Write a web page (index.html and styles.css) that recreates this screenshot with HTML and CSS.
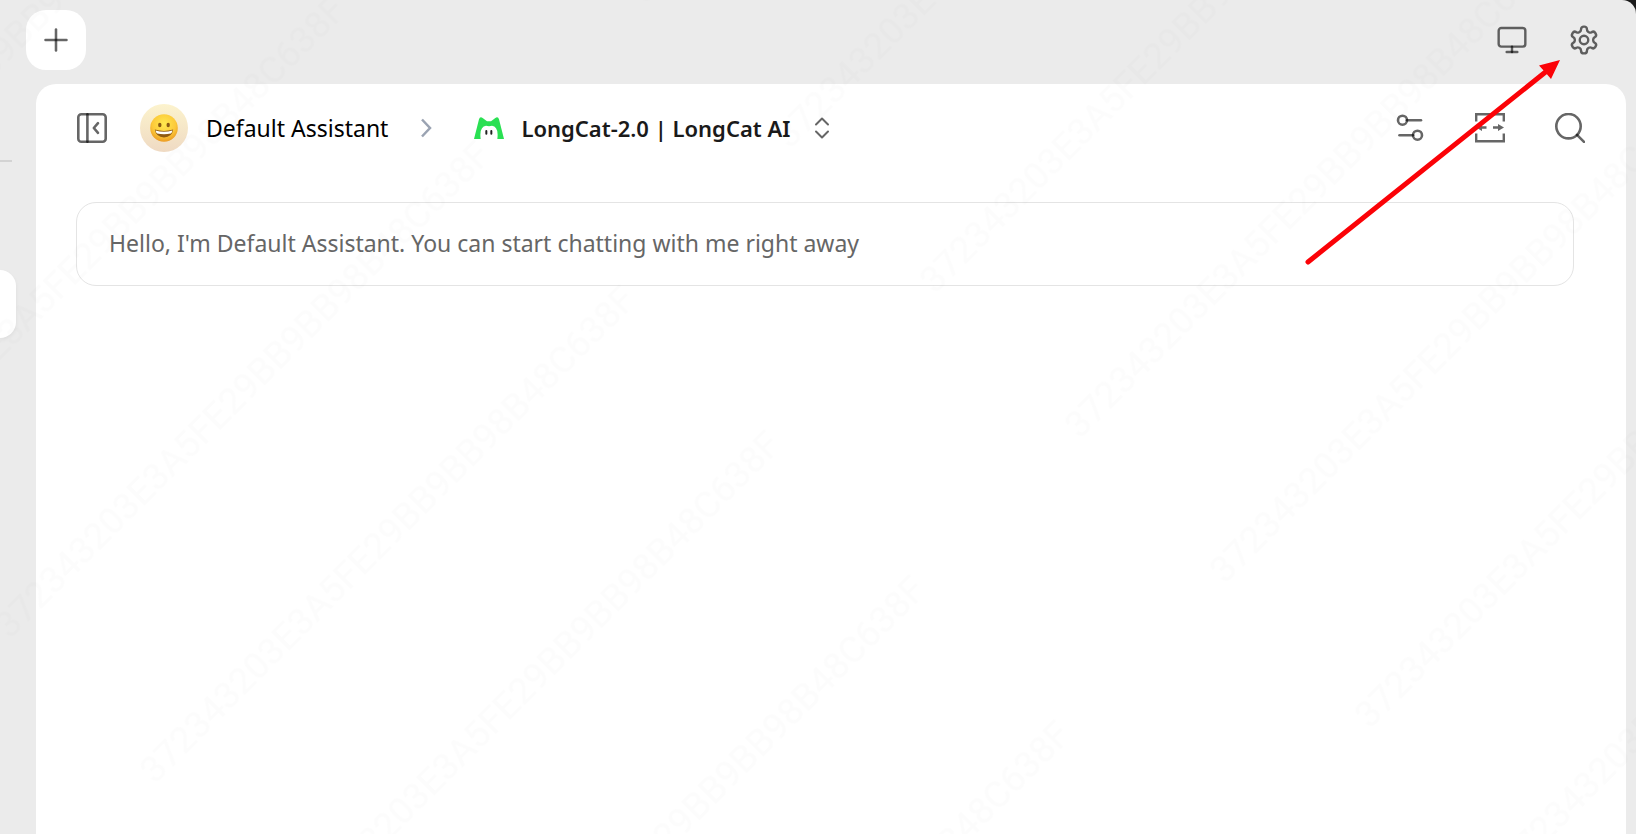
FILE: index.html
```
<!DOCTYPE html>
<html lang="en">

<head>
    <meta charset="UTF-8">
    <meta name="viewport" content="width=device-width, initial-scale=1.0">
    <title>Default Assistant</title>
    <link rel="stylesheet" href="styles.css">
</head>

<body>
<div class="window">
    <header class="tab-bar">
        <button type="button" class="new-tab" aria-label="New tab">
            <svg class="icon" width="36" height="36" viewBox="0 0 24 24" stroke-width="1.7">
                <path d="M5 12h14"/>
                <path d="M12 5v14"/>
            </svg>
        </button>
        <div class="tab-actions">
            <button type="button" class="icon-button" aria-label="Theme">
                <svg class="icon" width="32" height="32" viewBox="0 0 24 24" stroke-width="1.8">
                    <rect x="2" y="3" width="20" height="14" rx="2"/>
                    <path d="M8 21h8"/>
                    <path d="M12 17v4"/>
                </svg>
            </button>
            <button type="button" class="icon-button" aria-label="Settings">
                <svg class="icon" width="32" height="32" viewBox="0 0 24 24" stroke-width="1.8">
                    <path d="M12.22 2h-.44a2 2 0 0 0-2 2v.18a2 2 0 0 1-1 1.73l-.43.25a2 2 0 0 1-2 0l-.15-.08a2 2 0 0 0-2.73.73l-.22.38a2 2 0 0 0 .73 2.73l.15.1a2 2 0 0 1 1 1.72v.51a2 2 0 0 1-1 1.74l-.15.09a2 2 0 0 0-.73 2.73l.22.38a2 2 0 0 0 2.73.73l.15-.08a2 2 0 0 1 2 0l.43.25a2 2 0 0 1 1 1.73V20a2 2 0 0 0 2 2h.44a2 2 0 0 0 2-2v-.18a2 2 0 0 1 1-1.73l.43-.25a2 2 0 0 1 2 0l.15.08a2 2 0 0 0 2.73-.73l.22-.39a2 2 0 0 0-.73-2.73l-.15-.08a2 2 0 0 1-1-1.74v-.5a2 2 0 0 1 1-1.74l.15-.09a2 2 0 0 0 .73-2.73l-.22-.38a2 2 0 0 0-2.73-.73l-.15.08a2 2 0 0 1-2 0l-.43-.25a2 2 0 0 1-1-1.73V4a2 2 0 0 0-2-2z"/>
                    <circle cx="12" cy="12" r="3.2"/>
                </svg>
            </button>
        </div>
    </header>

    <div class="workspace">
        <aside class="sidebar">
            <div class="sidebar-divider"></div>
            <div class="sidebar-item"></div>
        </aside>

        <main class="chat">
            <nav class="chat-header">
                <button type="button" class="icon-button" aria-label="Hide sidebar">
                    <svg class="icon" width="30" height="30" viewBox="0 0 30 30" stroke-width="2.6">
                        <rect x="1.3" y="1.3" width="27.4" height="27.4" rx="3"/>
                        <path d="M10.4 1.3v27.4"/>
                        <path d="M21 10.2 16.8 15l4.2 4.8"/>
                    </svg>
                </button>
                <button type="button" class="assistant">
                    <span class="avatar">
                        <svg width="28" height="28" viewBox="0 0 28 28">
                            <defs>
                                <radialGradient id="face" cx="50%" cy="35%" r="65%">
                                    <stop offset="0" stop-color="#ffe94f"/>
                                    <stop offset="0.65" stop-color="#fcc93a"/>
                                    <stop offset="1" stop-color="#ec9b22"/>
                                </radialGradient>
                            </defs>
                            <circle cx="14" cy="14" r="13.8" fill="url(#face)"/>
                            <ellipse cx="9.8" cy="11" rx="1.7" ry="2.2" fill="#8a5a14"/>
                            <ellipse cx="18.2" cy="11" rx="1.7" ry="2.2" fill="#8a5a14"/>
                            <path d="M4.8 15.6Q14 18.4 23.2 15.6 22 23.4 14 23.4T4.8 15.6Z" fill="#8f5a12"/>
                            <path d="M5.6 16.4Q14 19 22.4 16.4 22 18.8 20.8 19.6 14 21 7.2 19.6 6 18.8 5.6 16.4Z" fill="#fff"/>
                        </svg>
                    </span>
                    <span>Default Assistant</span>
                </button>
                <svg class="separator" width="12" height="20" viewBox="0 0 12 20">
                    <path d="M2 1.5 10 10l-8 8.5"/>
                </svg>
                <button type="button" class="model">
                    <svg width="30" height="22" viewBox="0 0 90 66">
                        <path fill="#2ae053" d="M0 66 15 7Q18-3 27 4L39 13H51L63 4Q72-3 75 7L90 66H70Q73 43 66 34 62 26 54 26 50 26 45 28 40 26 36 26 28 26 24 34 17 43 20 66Z"/>
                        <rect x="34" y="39" width="6" height="14" rx="3" fill="#222"/>
                        <rect x="49" y="39" width="6" height="14" rx="3" fill="#222"/>
                    </svg>
                    <span class="model-name">LongCat-2.0 | LongCat AI</span>
                    <svg class="icon" width="16" height="22" viewBox="0 0 16 22" stroke-width="2">
                        <path d="M2 7.5l6-6 6 6"/>
                        <path d="M2 14.5l6 6 6-6"/>
                    </svg>
                </button>
                <div class="chat-actions">
                    <button type="button" class="icon-button" aria-label="Assistant settings">
                        <svg class="icon" width="30" height="30" viewBox="0 0 30 30" stroke-width="2.6">
                            <circle cx="7.5" cy="7.2" r="4.5"/>
                            <path d="M12 7.2h14"/>
                            <circle cx="22.5" cy="22.2" r="4.5"/>
                            <path d="M4.5 22.2H18"/>
                        </svg>
                    </button>
                    <button type="button" class="icon-button" aria-label="Wide mode">
                        <svg class="icon icon-square" width="30" height="30" viewBox="0 0 30 30" stroke-width="2.4">
                            <path d="M1.2 8.5V1.2H28.8V8.5M1.2 20.5V28.2H28.8V20.5"/>
                            <path d="M11.5 14.5H7M18 14.5h5"/>
                            <path class="solid" d="M1 14.5 7 11v7ZM29 14.5 23 11v7Z"/>
                        </svg>
                    </button>
                    <button type="button" class="icon-button" aria-label="Search">
                        <svg class="icon" width="30" height="30" viewBox="0 0 30 30" stroke-width="2.6">
                            <circle cx="13.5" cy="13.2" r="12.2"/>
                            <path d="M22 21.8l7 7"/>
                        </svg>
                    </button>
                </div>
            </nav>

            <p class="greeting">Hello, I'm Default Assistant. You can start chatting with me right away</p>
        </main>
    </div>

    <!-- watermark over the whole window -->
    <svg class="watermark" aria-hidden="true">
        <defs>
            <pattern id="mark" width="898" height="205" patternUnits="userSpaceOnUse" patternTransform="translate(-67 577) rotate(-45)">
                <text x="10" y="99">372343203E3A5FE29BB9BB98B48C638F</text>
            </pattern>
        </defs>
        <rect width="100%" height="100%" fill="url(#mark)"/>
    </svg>

    <!-- arrow pointing at settings -->
    <svg class="pointer" width="260" height="210" viewBox="0 0 260 210" aria-hidden="true">
        <path d="M8 202 248 10" stroke="#fb0207" stroke-width="5" stroke-linecap="round"/>
        <path d="M260 0 239 5.5 245 12 251 19Z" fill="#fb0207"/>
    </svg>
</div>
</body>

</html>
```
FILE: styles.css
```
* {
    box-sizing: border-box;
}

body {
    margin: 0;
    background-color: #1b1b1b;
    color: #000;
    font-family: "Noto Sans", "Open Sans", sans-serif;
    font-size: 23px;
    line-height: 32px;
}

button {
    display: flex;
    align-items: center;
    padding: 0;
    border: none;
    background: none;
    color: inherit;
    font: inherit;
    cursor: pointer;
}

.window {
    position: relative;
    display: flex;
    flex-direction: column;
    min-height: 100vh;
    overflow: hidden;
    background-color: #ebebeb;
    border-top-right-radius: 14px;
}

.icon {
    display: block;
    fill: none;
    stroke: rgba(0, 0, 0, 0.6);
    stroke-linecap: round;
    stroke-linejoin: round;
}

.icon-square {
    stroke-linecap: butt;
    stroke-linejoin: miter;
}

.icon .solid {
    fill: #666;
    stroke: none;
}

.tab-bar {
    display: flex;
    justify-content: space-between;
    align-items: center;
    padding: 10px 36px 14px 26px;
}

.new-tab {
    justify-content: center;
    width: 60px;
    height: 60px;
    border-radius: 20px;
    background-color: #fff;
}

.tab-actions {
    display: flex;
    gap: 40px;
}

.workspace {
    flex: 1;
    display: flex;
    padding-right: 10px;
}

.sidebar {
    width: 36px;
    padding-top: 76px;
}

.sidebar-divider {
    width: 12px;
    height: 2px;
    background-color: #d3d3d3;
}

.sidebar-item {
    width: 16px;
    height: 68px;
    margin-top: 108px;
    border-radius: 0 20px 20px 0;
    background-color: #fff;
    box-shadow: 0 2px 4px rgba(0, 0, 0, 0.06);
}

.chat {
    flex: 1;
    padding: 20px 52px 20px 40px;
    border-radius: 20px 20px 0 0;
    background-color: #fff;
}

.chat-header {
    display: flex;
    align-items: center;
    height: 48px;
    padding-left: 1px;
}

.assistant {
    gap: 18px;
    margin-left: 33px;
}

.avatar {
    display: flex;
    justify-content: center;
    align-items: center;
    width: 48px;
    height: 48px;
    border-radius: 50%;
    background: linear-gradient(#fcf3cd, #efdac3);
}

.separator {
    margin-left: 32px;
    fill: none;
    stroke: #9aa3b2;
    stroke-width: 2.5;
}

.model {
    margin-left: 42px;
    color: #1a1a1a;
    font-size: 22px;
    font-weight: 600;
}

.model-name {
    margin: 0 24px 0 17px;
}

.chat-actions {
    display: flex;
    gap: 50px;
    margin-left: auto;
    margin-right: -11px;
}

.greeting {
    margin: 50px 0 0;
    padding: 24px 32px 26px;
    border: 1px solid #e4e4e4;
    border-radius: 20px;
    color: #666;
}

.watermark {
    position: absolute;
    top: 0;
    left: 0;
    width: 100%;
    height: 100%;
    pointer-events: none;
    font-family: Roboto, sans-serif;
    font-size: 37px;
    fill: rgba(0, 0, 0, 0.01);
}

.pointer {
    position: absolute;
    top: 60px;
    right: 76px;
    pointer-events: none;
}
```
